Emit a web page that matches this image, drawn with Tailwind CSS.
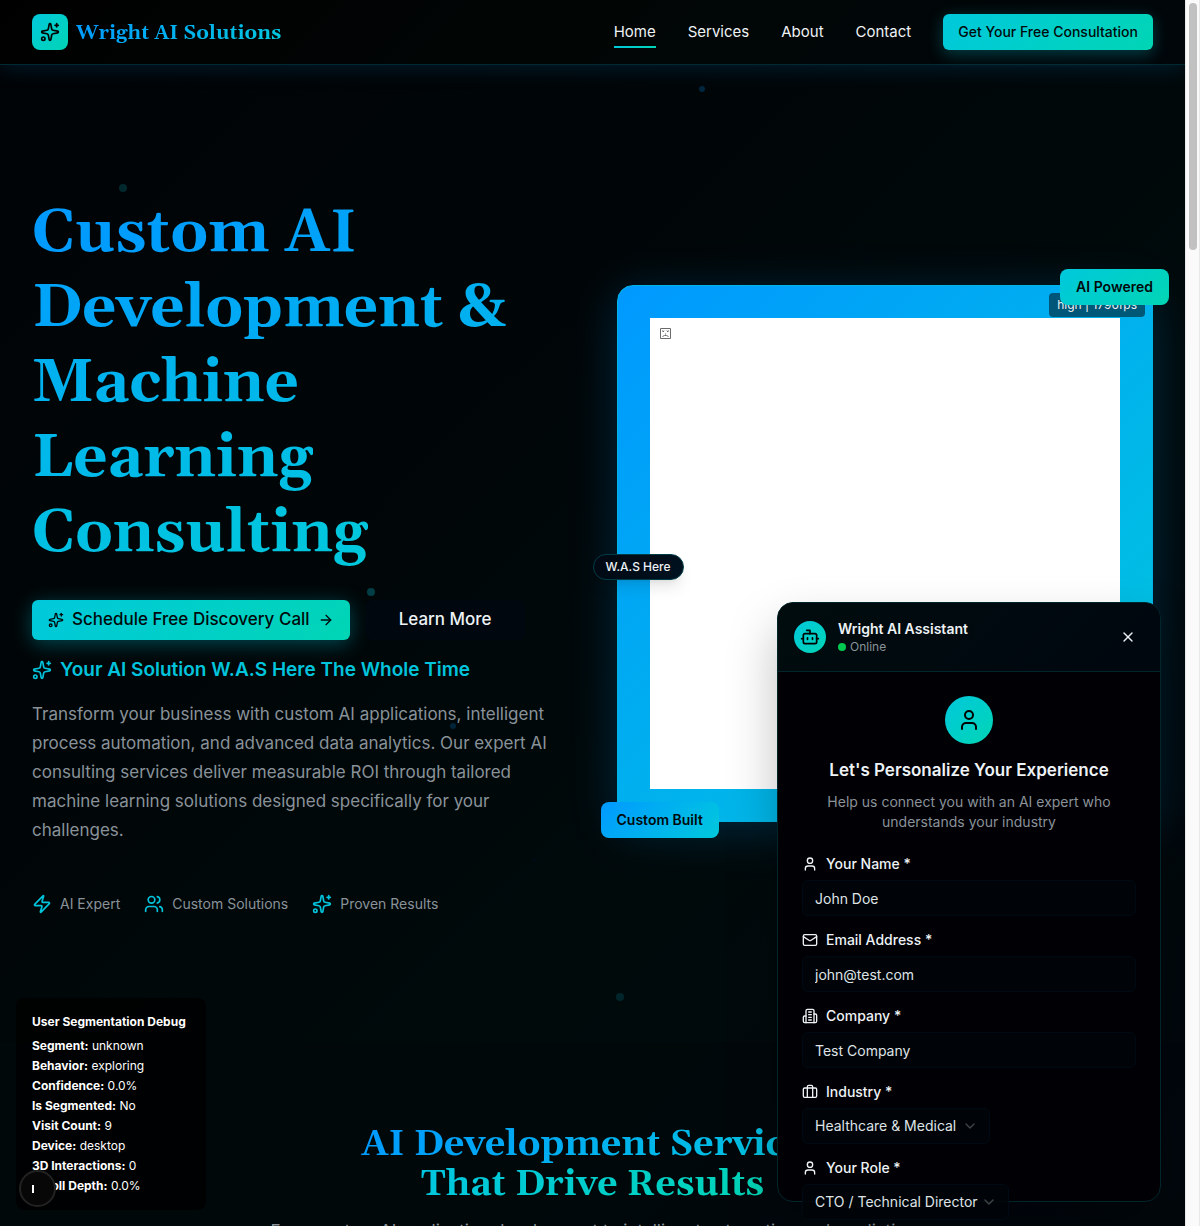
<!DOCTYPE html>
<html lang="en">
<head>
<meta charset="utf-8">
<meta name="viewport" content="width=device-width, initial-scale=1">
<title>Wright AI Solutions</title>
<script src="https://cdn.jsdelivr.net/npm/@tailwindcss/browser@4"></script>
</head>
<body class="bg-black font-['Inter',sans-serif] text-[#eef2f5] antialiased">
<svg class="hidden" aria-hidden="true">
  <symbol id="sparkles" viewBox="0 0 24 24" fill="none" stroke="currentColor" stroke-width="2" stroke-linecap="round" stroke-linejoin="round"><path d="M11.017 2.814a1 1 0 0 1 1.966 0l1.051 5.558a2 2 0 0 0 1.594 1.594l5.558 1.051a1 1 0 0 1 0 1.966l-5.558 1.051a2 2 0 0 0-1.594 1.594l-1.051 5.558a1 1 0 0 1-1.966 0l-1.051-5.558a2 2 0 0 0-1.594-1.594l-5.558-1.051a1 1 0 0 1 0-1.966l5.558-1.051a2 2 0 0 0 1.594-1.594z"/><path d="M20 2v4"/><path d="M22 4h-4"/><circle cx="4" cy="20" r="2"/></symbol>
  <symbol id="person" viewBox="0 0 24 24" fill="none" stroke="currentColor" stroke-width="2" stroke-linecap="round" stroke-linejoin="round"><path d="M19 21v-2a4 4 0 0 0-4-4H9a4 4 0 0 0-4 4v2"/><circle cx="12" cy="7" r="4"/></symbol>
  <symbol id="chevron" viewBox="0 0 24 24" fill="none" stroke="currentColor" stroke-width="2" stroke-linecap="round" stroke-linejoin="round"><path d="m6 9 6 6 6-6"/></symbol>
</svg>
<div class="flex h-screen overflow-hidden">
  <div class="relative h-full min-w-0 flex-1 overflow-hidden bg-[linear-gradient(135deg,#000305_0%,#000608_35%,#000a0b_65%,#00070d_100%)]">

    <header class="relative z-10 flex h-[65px] items-center justify-between border-b border-[#002a31] bg-[linear-gradient(135deg,#000000,#010605_50%,#00060a)] px-8 shadow-[0_4px_20px_rgba(0,153,255,0.15)]">
      <a href="#" class="flex items-center gap-2">
        <span class="flex size-9 items-center justify-center rounded-lg bg-linear-135 from-[#00c8dc] to-[#00d5b4] text-black"><svg class="size-5"><use href="#sparkles"/></svg></span>
        <span class="bg-linear-135 from-[#0099ff] to-[#00c8dc] bg-clip-text pt-0.5 font-[Georgia,Gelasio,'Liberation_Serif',serif] text-xl font-bold text-transparent">Wright AI Solutions</span>
      </a>
      <nav class="flex items-center gap-8">
        <a href="#" class="relative text-[15px] leading-6">Home<span class="absolute inset-x-0 -bottom-1 h-0.5 bg-linear-to-r from-[#00c8dc] to-[#00d5b4]"></span></a>
        <a href="#services" class="text-[15px] leading-6">Services</a>
        <a href="#about" class="text-[15px] leading-6">About</a>
        <a href="#contact" class="text-[15px] leading-6">Contact</a>
        <button class="h-9 rounded-md bg-linear-135 from-[#00c8dc] to-[#00d5b4] px-[15px] text-sm font-medium text-[#000a0c] shadow-[0_4px_16px_rgba(0,200,220,0.3)]">Get Your Free Consultation</button>
      </nav>
    </header>

    <!-- floating particles -->
    <div aria-hidden="true">
      <i class="absolute top-[184px] left-[119px] size-2 rounded-full bg-[#00292e]"></i>
      <i class="absolute top-[86px] left-[699px] size-1.5 rounded-full bg-[#00263f]"></i>
      <i class="absolute top-[588px] left-[367px] size-2 rounded-full bg-[#003d45]"></i>
      <i class="absolute top-[723px] left-[450px] size-1.5 rounded-full bg-[#00243a]"></i>
      <i class="absolute top-[993px] left-[616px] size-2 rounded-full bg-[#00262c]"></i>
      <i class="absolute top-[858px] left-[532px] size-1 rounded-full bg-[#000b16]"></i>
    </div>

    <main>
      <section class="grid grid-cols-2 items-center gap-12 px-8 py-32">
        <div>
          <h1 class="pt-[3px] font-[Georgia,Gelasio,'Liberation_Serif',serif] text-[60px] leading-[75px] font-bold"><span class="bg-linear-135 from-[#0099ff] to-[#00c8dc] bg-clip-text text-transparent">Custom AI Development &amp; Machine Learning Consulting</span></h1>
          <div class="mt-[29px] flex gap-4">
            <button class="flex h-10 items-center gap-2 rounded-md bg-linear-135 from-[#00c8dc] to-[#00d5b4] px-4 text-[17px] font-medium text-[#000a0c] shadow-[0_4px_20px_rgba(0,200,220,0.35)]">
              <svg class="size-4"><use href="#sparkles"/></svg>Schedule Free Discovery Call
              <svg class="size-4" viewBox="0 0 24 24" fill="none" stroke="currentColor" stroke-width="2" stroke-linecap="round" stroke-linejoin="round"><path d="M5 12h14"/><path d="m12 5 7 7-7 7"/></svg>
            </button>
            <button class="h-10 rounded-md border border-[#00090f] bg-[#00070e] px-8 text-[17px] font-medium">Learn More</button>
          </div>
          <p class="mt-4 flex items-center gap-2 text-[19px] leading-7 font-semibold text-[#00c4dc]"><svg class="size-5"><use href="#sparkles"/></svg>Your AI Solution W.A.S Here The Whole Time</p>
          <p class="mt-4 text-[17px] leading-[29px] text-[#8a9299]">Transform your business with custom AI applications, intelligent process automation, and advanced data analytics. Our expert AI consulting services deliver measurable ROI through tailored machine learning solutions designed specifically for your challenges.</p>
          <ul class="mt-[49px] flex gap-6 text-sm text-[#8a9299]">
            <li class="flex items-center gap-2"><svg class="size-5 text-[#00c4dc]" viewBox="0 0 24 24" fill="none" stroke="currentColor" stroke-width="2" stroke-linecap="round" stroke-linejoin="round"><path d="M4 14a1 1 0 0 1-.78-1.63l9.9-10.2a.5.5 0 0 1 .86.46l-1.92 6.02A1 1 0 0 0 13 10h7a1 1 0 0 1 .78 1.63l-9.9 10.2a.5.5 0 0 1-.86-.46l1.92-6.02A1 1 0 0 0 11 14z"/></svg>AI Expert</li>
            <li class="flex items-center gap-2"><svg class="size-5 text-[#00c4dc]" viewBox="0 0 24 24" fill="none" stroke="currentColor" stroke-width="2" stroke-linecap="round" stroke-linejoin="round"><path d="M16 21v-2a4 4 0 0 0-4-4H6a4 4 0 0 0-4 4v2"/><circle cx="9" cy="7" r="4"/><path d="M22 21v-2a4 4 0 0 0-3-3.87"/><path d="M16 3.128a4 4 0 0 1 0 7.744"/></svg>Custom Solutions</li>
            <li class="flex items-center gap-2"><svg class="size-5 text-[#00c4dc]"><use href="#sparkles"/></svg>Proven Results</li>
          </ul>
        </div>

        <div class="relative">
          <div class="relative aspect-square rounded-2xl border border-[#00b4e6] bg-[linear-gradient(135deg,#0099ff,#00c8dc)] bg-origin-border p-8 shadow-[0_8px_48px_rgba(0,153,255,0.22)]">
            <div class="h-full bg-white p-2.5">
              <svg class="h-[11px] w-[11px]" viewBox="0 0 11 11" role="img" aria-label="Image unavailable" fill="none" stroke="#6b6b6b"><path d="M.5.5h10v10H.5z"/><path d="M2.5 2.5l1.5 1.5M4 2.5 2.5 4M7 2.5 8.500 4M8.500 2.500 7 4M5 6h1M2.500 8.500l2-1h2l2 1"/></svg>
            </div>
            <span class="absolute top-[7px] right-[7px] rounded-sm bg-black/50 px-2 py-1 text-xs">high | 1796fps</span>
          </div>
          <span class="absolute -top-4 -right-4 rounded-lg bg-linear-135 from-[#00c8dc] to-[#00d5b4] px-4 py-2 text-sm font-semibold text-[#000a0c]">AI Powered</span>
          <span class="absolute -bottom-4 -left-4 rounded-lg bg-linear-135 from-[#0099ff] to-[#00c8dc] px-4 py-2 text-sm font-semibold text-[#000a0c]">Custom Built</span>
          <span class="absolute top-1/2 -left-6 rounded-full border border-[#003c46] bg-linear-135 from-[#000812] to-[#001220] px-3 py-1 text-xs font-medium shadow-lg">W.A.S Here</span>
        </div>
      </section>

      <section id="services" class="bg-[linear-gradient(135deg,#00080a,#000809_40%,#00060d_80%,#00090a)] px-8 py-20 text-center">
        <h2 class="pt-[3px] font-[Georgia,Gelasio,'Liberation_Serif',serif] text-4xl font-bold"><span class="bg-[linear-gradient(135deg,#0099ff,#00c8dc_60%,#00d5b4)] bg-clip-text text-transparent">AI Development Services<br>That Drive Results</span></h2>
        <p class="mx-auto mt-3 max-w-[672px] text-[17px] leading-7 text-[#8a9299]">From custom AI application development to intelligent automation and predictive analytics, we help businesses grow.</p>
      </section>
    </main>

    <aside class="absolute bottom-4 left-4 w-[190px] rounded-lg bg-black/80 p-4 text-xs text-white">
      <h4 class="mb-2 font-bold">User Segmentation Debug</h4>
      <div class="space-y-1">
        <p><b>Segment:</b> unknown</p>
        <p><b>Behavior:</b> exploring</p>
        <p><b>Confidence:</b> 0.0%</p>
        <p><b>Is Segmented:</b> No</p>
        <p><b>Visit Count:</b> 9</p>
        <p><b>Device:</b> desktop</p>
        <p><b>3D Interactions:</b> 0</p>
        <p><b>Scroll Depth:</b> 0.0%</p>
      </div>
    </aside>
    <button aria-label="Developer tools" class="absolute bottom-[19px] left-[19px] flex size-[37px] items-center rounded-full border-2 border-[#222] bg-[#070707] pl-[11px]"><span class="h-2 w-0.5 bg-white"></span></button>

    <section aria-label="Wright AI Assistant" class="absolute right-6 bottom-6 z-20 h-[600px] w-96 rounded-2xl border border-[#00262c] bg-[#000005] shadow-[0_25px_50px_rgba(0,0,0,0.25)]">
      <div class="flex h-[69px] items-center gap-3 rounded-t-2xl border-b border-[#00262c] bg-linear-135 from-[#000c0e] to-[#00070f] px-4">
        <span class="flex size-8 items-center justify-center rounded-full bg-linear-135 from-[#00c8dc] to-[#00d5b4] text-black"><svg class="size-5" viewBox="0 0 24 24" fill="none" stroke="currentColor" stroke-width="2" stroke-linecap="round" stroke-linejoin="round"><path d="M12 8V4H8"/><rect width="16" height="12" x="4" y="8" rx="2"/><path d="M2 14h2"/><path d="M20 14h2"/><path d="M15 13v2"/><path d="M9 13v2"/></svg></span>
        <div class="flex-1">
          <h3 class="text-sm font-semibold">Wright AI Assistant</h3>
          <p class="flex items-center gap-1 text-xs text-[#8a9299]"><span class="size-2 rounded-full bg-[#00c950]"></span>Online</p>
        </div>
        <button aria-label="Close" class="flex size-8 items-center justify-center"><svg class="size-4" viewBox="0 0 24 24" fill="none" stroke="currentColor" stroke-width="2" stroke-linecap="round"><path d="M18 6 6 18"/><path d="m6 6 12 12"/></svg></button>
      </div>
      <div class="p-6">
        <span class="mx-auto flex size-12 items-center justify-center rounded-full bg-linear-135 from-[#00c8dc] to-[#00d5b4] text-black"><svg class="size-6"><use href="#person"/></svg></span>
        <h3 class="mt-3 text-center text-[17px] leading-7 font-semibold">Let's Personalize Your Experience</h3>
        <p class="mx-auto mt-2 max-w-80 text-center text-sm text-[#8a9299]">Help us connect you with an AI expert who understands your industry</p>
        <form class="mt-[22px] space-y-3.5 text-sm">
          <div>
            <label for="name" class="flex h-5 items-center gap-2 font-medium"><svg class="size-4"><use href="#person"/></svg>Your Name *</label>
            <input id="name" type="text" value="John Doe" class="mt-1.5 block h-9 w-full rounded-md border border-[#000a14] bg-[#000408] px-3 text-[#dfe3e6] outline-none">
          </div>
          <div>
            <label for="email" class="flex h-5 items-center gap-2 font-medium"><svg class="size-4" viewBox="0 0 24 24" fill="none" stroke="currentColor" stroke-width="2" stroke-linecap="round" stroke-linejoin="round"><path d="m22 7-8.991 5.727a2 2 0 0 1-2.009 0L2 7"/><rect x="2" y="4" width="20" height="16" rx="2"/></svg>Email Address *</label>
            <input id="email" type="email" value="john@test.com" class="mt-1.5 block h-9 w-full rounded-md border border-[#000a14] bg-[#000408] px-3 text-[#dfe3e6] outline-none">
          </div>
          <div>
            <label for="company" class="flex h-5 items-center gap-2 font-medium"><svg class="size-4" viewBox="0 0 24 24" fill="none" stroke="currentColor" stroke-width="2" stroke-linecap="round" stroke-linejoin="round"><path d="M6 22V4a2 2 0 0 1 2-2h8a2 2 0 0 1 2 2v18Z"/><path d="M6 12H4a2 2 0 0 0-2 2v6a2 2 0 0 0 2 2h2"/><path d="M18 9h2a2 2 0 0 1 2 2v9a2 2 0 0 1-2 2h-2"/><path d="M10 6h4"/><path d="M10 10h4"/><path d="M10 14h4"/><path d="M10 18h4"/></svg>Company *</label>
            <input id="company" type="text" value="Test Company" class="mt-1.5 block h-9 w-full rounded-md border border-[#000a14] bg-[#000408] px-3 text-[#dfe3e6] outline-none">
          </div>
          <div>
            <label for="industry" class="flex h-5 items-center gap-2 font-medium"><svg class="size-4" viewBox="0 0 24 24" fill="none" stroke="currentColor" stroke-width="2" stroke-linecap="round" stroke-linejoin="round"><path d="M16 20V4a2 2 0 0 0-2-2h-4a2 2 0 0 0-2 2v16"/><rect width="20" height="14" x="2" y="6" rx="2"/></svg>Industry *</label>
            <div class="relative mt-1.5 w-[188px]">
              <select id="industry" class="block h-9 w-full appearance-none rounded-md border border-[#000a14] bg-[#000408] pr-8 pl-3 text-[#dfe3e6] outline-none"><option>Healthcare &amp; Medical</option></select>
              <svg class="pointer-events-none absolute top-2.5 right-3 size-4 text-[#40464a]"><use href="#chevron"/></svg>
            </div>
          </div>
          <div>
            <label for="role" class="flex h-5 items-center gap-2 font-medium"><svg class="size-4"><use href="#person"/></svg>Your Role *</label>
            <div class="relative mt-1.5 w-[207px]">
              <select id="role" class="block h-9 w-full appearance-none rounded-md border border-[#000a14] bg-[#000408]/80 pr-7 pl-3 text-[#dfe3e6] outline-none"><option>CTO / Technical Director</option></select>
              <svg class="pointer-events-none absolute top-2.5 right-3 size-4 text-[#40464a]"><use href="#chevron"/></svg>
            </div>
          </div>
        </form>
      </div>
    </section>
  </div>

  <!-- scroll track -->
  <div aria-hidden="true" class="flex w-[15px] shrink-0 justify-center border-x border-[#e8e8e8] bg-[#fafafa] pt-[3px]"><span class="h-[247px] w-2 rounded-full bg-[#c1c1c1]"></span></div>
</div>
</body>
</html>
